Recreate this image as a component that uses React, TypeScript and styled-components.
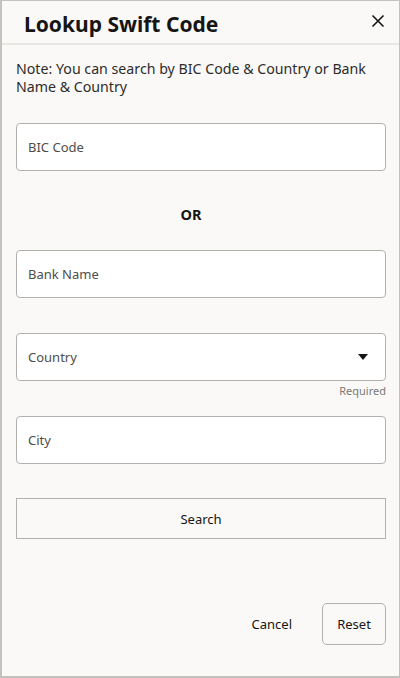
import React from 'react'
import styled, { createGlobalStyle } from 'styled-components'

const Global = createGlobalStyle`
    html, body {
        margin: 0;
        padding: 0;
        background: #ffffff;
    }
    * {
        box-sizing: border-box;
    }
`;

const Field = ({ label, select }: { label: string; select?: boolean }) => (
    <InputBox>
        <Label>{label}</Label>
        {select && <Caret />}
    </InputBox>
)

const App: React.FC = () => {
    return (
        <>
            <Global />
            <Dialog>
                <Header>
                    <Title>Lookup Swift Code</Title>
                    <Close aria-label="Close">
                        <svg width="14" height="14" viewBox="0 0 14 14">
                            <path d="M1.5 1.5 L12.5 12.5 M12.5 1.5 L1.5 12.5" stroke="#161513" strokeWidth="1.6" />
                        </svg>
                    </Close>
                </Header>
                <Body>
                    <Note>Note: You can search by BIC Code &amp; Country or Bank Name &amp; Country</Note>
                    <Form>
                        <Field label="BIC Code" />
                        <Or>OR</Or>
                        <Field label="Bank Name" />
                        <Group>
                            <Field label="Country" select />
                            <Hint>Required</Hint>
                        </Group>
                        <Field label="City" />
                        <SearchButton>Search</SearchButton>
                    </Form>
                    <Footer>
                        <TextButton>Cancel</TextButton>
                        <OutlineButton>Reset</OutlineButton>
                    </Footer>
                </Body>
            </Dialog>
        </>
    )
}

const Dialog = styled.div`
    width: 400px;
    height: 678px;
    background: #faf9f8;
    border: 1px solid #c4c2bf;
    border-left-width: 2px;
    border-bottom-width: 2px;
    display: flex;
    flex-direction: column;
    font-family: "Noto Sans", "Open Sans", sans-serif;
    color: #161513;
`;

const Header = styled.div`
    height: 44px;
    flex-shrink: 0;
    display: flex;
    align-items: center;
    justify-content: space-between;
    padding: 3px 11px 0 22px;
    border-bottom: 2px solid #e9e7e4;
`;

const Title = styled.h1`
    margin: 0;
    font-size: 21px;
    font-weight: 700;
    letter-spacing: 0;
`;

const Close = styled.button`
    width: 20px;
    height: 20px;
    padding: 0;
    border: none;
    background: none;
    display: flex;
    align-items: center;
    justify-content: center;
    margin-top: -6px;
`;

const Body = styled.div`
    flex: 1;
    display: flex;
    flex-direction: column;
    padding: 15px 13px 31px 14px;
`;

const Note = styled.p`
    margin: 0;
    font-size: 14.2px;
    line-height: 18px;
    color: #2e2c2a;
`;

const Form = styled.div`
    display: flex;
    flex-direction: column;
    margin-top: 27px;
`;

const InputBox = styled.div`
    height: 48px;
    background: #ffffff;
    border: 1px solid #b3b1ae;
    border-radius: 4px;
    display: flex;
    align-items: center;
    justify-content: space-between;
    padding: 0 17px 0 11px;
    & + & {
        margin-top: 35px;
    }
`;

const Label = styled.span`
    font-size: 13px;
    color: #4f4d4a;
`;

const Caret = styled.span`
    width: 0;
    height: 0;
    border-left: 5.5px solid transparent;
    border-right: 5.5px solid transparent;
    border-top: 6px solid #161513;
`;

const Or = styled.div`
    height: 20px;
    margin: 33px 0 26px;
    text-align: center;
    font-size: 14.5px;
    font-weight: 700;
    line-height: 20px;
    padding-right: 20px;
`;

const Group = styled.div`
    display: flex;
    flex-direction: column;
    margin: 35px 0 18px;
`;

const Hint = styled.div`
    margin-top: 3px;
    text-align: right;
    font-size: 11px;
    line-height: 14px;
    color: #7b7976;
`;

const SearchButton = styled.button`
    height: 41px;
    margin-top: 34px;
    background: transparent;
    border: 1px solid #b3b1ae;
    border-radius: 0;
    font-family: inherit;
    font-size: 13px;
    color: #161513;
`;

const Footer = styled.div`
    margin-top: auto;
    display: flex;
    justify-content: flex-end;
    align-items: center;
    gap: 14px;
`;

const TextButton = styled.button`
    height: 42px;
    padding: 0 16px;
    background: none;
    border: none;
    font-family: inherit;
    font-size: 13px;
    color: #161513;
`;

const OutlineButton = styled(TextButton)`
    width: 64px;
    padding: 0;
    border: 1px solid #b3b1ae;
    border-radius: 5px;
`;

export default App
